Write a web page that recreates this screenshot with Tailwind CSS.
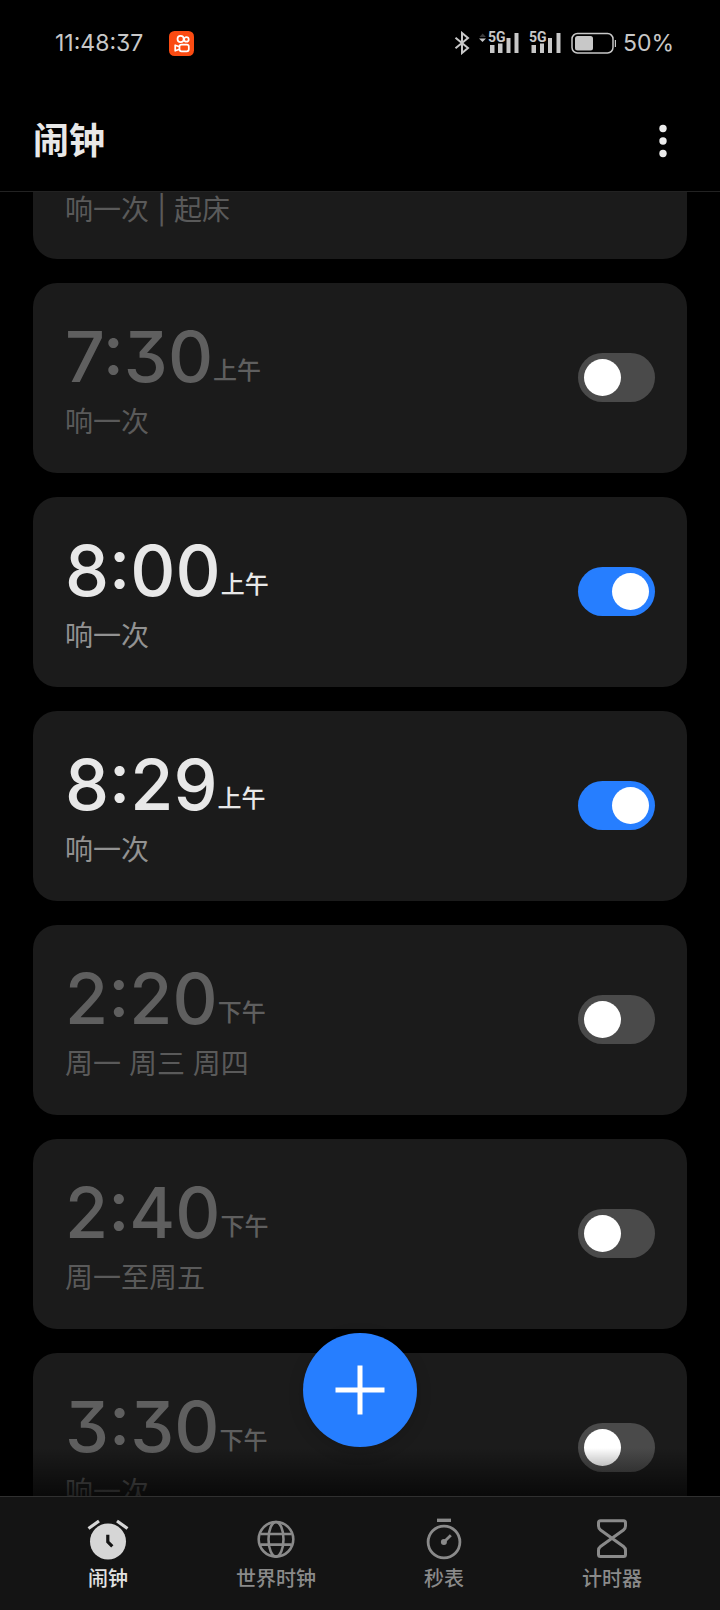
<!DOCTYPE html>
<html lang="zh-CN">
<head>
<meta charset="utf-8">
<meta name="viewport" content="width=device-width, initial-scale=1">
<title>闹钟</title>
<script src="https://cdn.jsdelivr.net/npm/@tailwindcss/browser@4"></script>
</head>
<body class="bg-black font-['Inter','Noto_Sans_CJK_SC',sans-serif] [font-feature-settings:'cv09','calt']">
<div class="relative flex h-screen flex-col overflow-hidden bg-black">

  <!-- Status bar -->
  <div class="flex h-[86px] shrink-0 items-center justify-between pr-[46px] pl-[55px] text-[23px] text-[#c8c8c8]">
    <div class="flex items-center gap-[26px]">
      <span>11:48:37</span>
      <svg class="size-[25px]" viewBox="0 0 25 25" fill="none" stroke="#fff" stroke-width="1.7" stroke-linejoin="round">
        <rect width="25" height="25" rx="5.5" fill="#fb4b12" stroke="none"/>
        <circle cx="11.600" cy="8" r="3.1"/>
        <circle cx="17.400" cy="8.400" r="2.300"/>
        <rect x="10.500" y="13.600" width="9.300" height="6.700" rx="2"/>
        <path d="M10.500 15.800L6.200 14.200V19.800L10.500 18.200"/>
      </svg>
    </div>
    <div class="flex items-center gap-[6px]">
      <svg class="mr-[2px] h-[24px] w-[16px]" viewBox="0 0 16 24" fill="none" stroke="#c8c8c8" stroke-width="2"><path d="M1.500 6.800L14 17L8 22V2L14 7L1.500 17.200"/></svg>
      <svg class="h-[28px] w-[41px]" viewBox="0 -1 41 28" fill="#c8c8c8">
        <path d="M1.500 7L4.700 3.500L7.900 7z" fill="#3c3c3c"/><path d="M1 8.500H8L4.500 12z"/>
        <text x="10" y="12" font-family="Liberation Sans Narrow, Roboto, sans-serif" font-size="14" font-weight="700">5G</text>
        <path d="M12 15H16.500V23H12zM20 13.500H24.500V23H20zM28.500 8H32.500V23H28.500zM36.500 3H40.500V23H36.500z"/>
      </svg>
      <svg class="ml-[3px] h-[28px] w-[33px]" viewBox="0 -1 33 28" fill="#c8c8c8">
        <text x="1" y="12" font-family="Liberation Sans Narrow, Roboto, sans-serif" font-size="14" font-weight="700">5G</text>
        <path d="M3.500 15H8V23H3.500zM12 13.500H16V23H12zM20 8H24V23H20zM28.500 3H32.500V23H28.500z"/>
      </svg>
      <svg class="ml-1 h-[24px] w-[46px]" viewBox="0 0 46 24">
        <rect x="1" y="2.500" width="41" height="19.500" rx="5.500" fill="none" stroke="#c8c8c8" stroke-width="1.500"/>
        <rect x="4" y="5" width="18" height="14.500" rx="2.500" fill="#c8c8c8"/>
        <path d="M43.800 9h1.200v7h-1.200z" fill="#c8c8c8"/>
      </svg>
      <span>50%</span>
    </div>
  </div>

  <!-- Title bar -->
  <header class="flex h-[106px] shrink-0 items-center justify-between border-b border-[#222] pt-1 pr-[35px] pl-[33px]">
    <h1 class="text-4xl font-bold text-[#e8e8e8]">闹钟</h1>
    <button type="button" aria-label="更多选项" class="flex h-12 w-11 items-center justify-center">
      <svg class="h-[34px] w-2" viewBox="0 0 8 34" fill="#ececec"><circle cx="4" cy="4.500" r="3.700"/><circle cx="4" cy="17" r="3.700"/><circle cx="4" cy="29.500" r="3.700"/></svg>
    </button>
  </header>

  <!-- Alarm list -->
  <main class="relative min-h-0 flex-1 overflow-hidden">
    <ul class="flex flex-col gap-6 px-[33px]">
      <li class="flex h-[67px] shrink-0 rounded-b-3xl bg-[#1b1b1b] px-8 text-[28px] leading-9 text-[#5a5a5a]">响一次 | 起床</li>

      <li class="flex shrink-0 items-center justify-between rounded-3xl bg-[#1b1b1b] px-8 pt-8 pb-[33px]">
        <label for="a1" class="text-[#5f5f5f]">
          <span class="flex h-21 items-end"><span class="text-[70px] leading-21 font-medium">7:30</span><span class="mb-3 text-2xl leading-8 font-medium">上午</span></span>
          <span class="mt-[5px] block text-[28px] leading-9 text-[#5a5a5a]">响一次</span>
        </label>
        <input id="a1" type="checkbox" role="switch" class="h-[49px] w-[77px] appearance-none rounded-full bg-[#4a4a4a] p-[6px] before:block before:size-[37px] before:rounded-full before:bg-white checked:bg-[#267eff] checked:before:ml-auto">
      </li>

      <li class="flex shrink-0 items-center justify-between rounded-3xl bg-[#1b1b1b] px-8 pt-8 pb-[33px]">
        <label for="a2" class="text-[#e8e8e8]">
          <span class="flex h-21 items-end"><span class="text-[70px] leading-21 font-medium">8:00</span><span class="mb-3 text-2xl leading-8 font-medium">上午</span></span>
          <span class="mt-[5px] block text-[28px] leading-9 text-[#929292]">响一次</span>
        </label>
        <input id="a2" type="checkbox" role="switch" checked class="h-[49px] w-[77px] appearance-none rounded-full bg-[#4a4a4a] p-[6px] before:block before:size-[37px] before:rounded-full before:bg-white checked:bg-[#267eff] checked:before:ml-auto">
      </li>

      <li class="flex shrink-0 items-center justify-between rounded-3xl bg-[#1b1b1b] px-8 pt-8 pb-[33px]">
        <label for="a3" class="text-[#e8e8e8]">
          <span class="flex h-21 items-end"><span class="text-[70px] leading-21 font-medium">8:29</span><span class="mb-3 text-2xl leading-8 font-medium">上午</span></span>
          <span class="mt-[5px] block text-[28px] leading-9 text-[#929292]">响一次</span>
        </label>
        <input id="a3" type="checkbox" role="switch" checked class="h-[49px] w-[77px] appearance-none rounded-full bg-[#4a4a4a] p-[6px] before:block before:size-[37px] before:rounded-full before:bg-white checked:bg-[#267eff] checked:before:ml-auto">
      </li>

      <li class="flex shrink-0 items-center justify-between rounded-3xl bg-[#1b1b1b] px-8 pt-8 pb-[33px]">
        <label for="a4" class="text-[#5f5f5f]">
          <span class="flex h-21 items-end"><span class="text-[70px] leading-21 font-medium">2:20</span><span class="mb-3 text-2xl leading-8 font-medium">下午</span></span>
          <span class="mt-[5px] block text-[28px] leading-9 text-[#5a5a5a]">周一 周三 周四</span>
        </label>
        <input id="a4" type="checkbox" role="switch" class="h-[49px] w-[77px] appearance-none rounded-full bg-[#4a4a4a] p-[6px] before:block before:size-[37px] before:rounded-full before:bg-white checked:bg-[#267eff] checked:before:ml-auto">
      </li>

      <li class="flex shrink-0 items-center justify-between rounded-3xl bg-[#1b1b1b] px-8 pt-8 pb-[33px]">
        <label for="a5" class="text-[#5f5f5f]">
          <span class="flex h-21 items-end"><span class="text-[70px] leading-21 font-medium">2:40</span><span class="mb-3 text-2xl leading-8 font-medium">下午</span></span>
          <span class="mt-[5px] block text-[28px] leading-9 text-[#5a5a5a]">周一至周五</span>
        </label>
        <input id="a5" type="checkbox" role="switch" class="h-[49px] w-[77px] appearance-none rounded-full bg-[#4a4a4a] p-[6px] before:block before:size-[37px] before:rounded-full before:bg-white checked:bg-[#267eff] checked:before:ml-auto">
      </li>

      <li class="flex shrink-0 items-center justify-between rounded-3xl bg-[#1b1b1b] px-8 pt-8 pb-[33px]">
        <label for="a6" class="text-[#5f5f5f]">
          <span class="flex h-21 items-end"><span class="text-[70px] leading-21 font-medium">3:30</span><span class="mb-3 text-2xl leading-8 font-medium">下午</span></span>
          <span class="mt-[5px] block text-[28px] leading-9 text-[#5a5a5a]">响一次</span>
        </label>
        <input id="a6" type="checkbox" role="switch" class="h-[49px] w-[77px] appearance-none rounded-full bg-[#4a4a4a] p-[6px] before:block before:size-[37px] before:rounded-full before:bg-white checked:bg-[#267eff] checked:before:ml-auto">
      </li>
    </ul>

    <!-- Fade above the tab bar, and the add button -->
    <div class="pointer-events-none absolute inset-x-0 bottom-0 h-12 bg-linear-to-t from-black/65 to-transparent"></div>
    <button type="button" aria-label="添加闹钟" class="absolute bottom-[49px] left-1/2 flex size-[114px] -translate-x-1/2 items-center justify-center rounded-full bg-[#267eff] shadow-[0_4px_16px_rgba(0,0,0,0.15)]">
      <svg class="size-[50px]" viewBox="0 0 50 50" stroke="#fff" stroke-width="5"><path d="M25 0.500V49.500M0.500 25H49.500"/></svg>
    </button>
  </main>

  <!-- Tab bar -->
  <nav class="grid h-[114px] shrink-0 grid-cols-4 border-t border-[#303030] bg-[#141414] px-6 pt-5 text-xl leading-8 font-medium text-[#8a8a8a]">
    <a href="#alarm" aria-current="page" class="flex flex-col items-center gap-[2px] text-[#e2e2e2]">
      <svg class="size-11" viewBox="0 0 44 44">
        <circle cx="22" cy="24.500" r="18" fill="#d6d6d6"/>
        <path d="M2.500 11.500L13 4M31 4L41.500 11.500" stroke="#d6d6d6" stroke-width="3.200" fill="none"/>
        <path d="M21.800 17.700V24.800L26.300 29.300" stroke="#141414" stroke-width="3.200" fill="none"/>
      </svg>
      闹钟
    </a>
    <a href="#world" class="flex flex-col items-center gap-[2px]">
      <svg class="size-11" viewBox="0 0 44 44" fill="none" stroke="#8a8a8a" stroke-width="2.600">
        <circle cx="22" cy="22.300" r="17.300"/><ellipse cx="22" cy="22.300" rx="7.500" ry="17.300"/><path d="M6.500 17H37.500M6.500 27.600H37.500"/>
      </svg>
      世界时钟
    </a>
    <a href="#stopwatch" class="flex flex-col items-center gap-[2px]">
      <svg class="size-11" viewBox="0 0 44 44" fill="none" stroke="#8a8a8a" stroke-width="2.800">
        <circle cx="22" cy="25" r="15.900"/><path d="M15 3.300H29" stroke-width="3.400"/><path d="M22 25L28.800 18.200"/><circle cx="21.900" cy="25" r="3" fill="#8a8a8a" stroke="none"/>
      </svg>
      秒表
    </a>
    <a href="#timer" class="flex flex-col items-center gap-[2px]">
      <svg class="size-11" viewBox="0 0 44 44" fill="none" stroke="#8a8a8a" stroke-width="3" stroke-linejoin="round">
        <path d="M10.500 3.800H33.500Q35.500 3.800 35.500 5.800V9Q35.500 11.500 33.500 13L10.500 29.500Q8.500 31 8.500 33.500V37.500Q8.500 39.500 10.500 39.500H33.500Q35.500 39.500 35.500 37.500V33.500Q35.500 31 33.500 29.500L10.500 13Q8.500 11.500 8.500 9V5.800Q8.500 3.800 10.500 3.800Z"/>
      </svg>
      计时器
    </a>
  </nav>
</div>
</body>
</html>
